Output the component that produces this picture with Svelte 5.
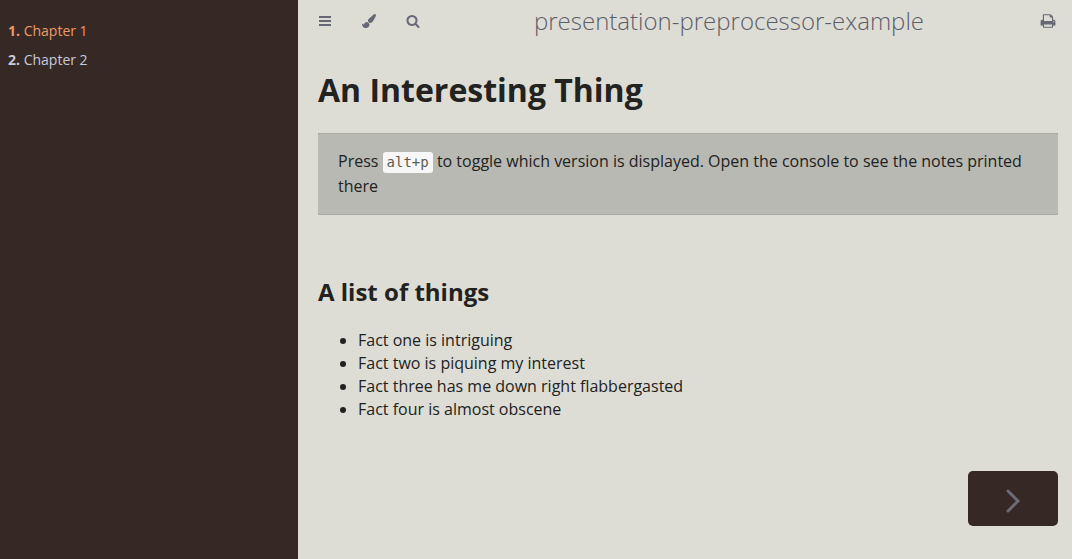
<script>
  const chapters = ['Chapter 1', 'Chapter 2'];
  const facts = [
    'Fact one is intriguing',
    'Fact two is piquing my interest',
    'Fact three has me down right flabbergasted',
    'Fact four is almost obscene'
  ];
</script>

<div class="book">
  <nav class="sidebar" aria-label="Chapters">
    <ol>
      {#each chapters as chapter, i}
        <li><a href="#chapter-{i + 1}" class:active={i === 0}><strong>{i + 1}.</strong> {chapter}</a></li>
      {/each}
    </ol>
  </nav>
  <div class="page">
    <header>
      <div class="tools">
        <button aria-label="Toggle table of contents">
          <svg width="14" height="14" viewBox="0 0 14 14"><path d="M1 2h12v2H1zM1 6h12v2H1zM1 10h12v2H1z"/></svg>
        </button>
        <button aria-label="Change theme">
          <svg width="14" height="14" viewBox="0 0 1792 1792"><path d="M1615 0q70 0 122.500 46.500t52.500 116.500q0 63-45 151-332 629-465 752-97 91-218 91-126 0-216.500-92.500t-90.500-219.500q0-128 92-212l638-579q59-54 130-54zm-909 1034q39 76 106.500 130t150.500 76l1 71q4 213-129.500 347t-348.500 134q-123 0-218-46.500t-152.500-127.500-86.500-183-29-220q7 5 41 30t62 44.500 59 36.500 46 17q41 0 55-37 25-66 57.500-112.500t69.500-76 88-47.500 103-25.500 125-10.500z"/></svg>
        </button>
        <button aria-label="Search">
          <svg width="14" height="14" viewBox="0 0 1792 1792"><path d="M1216 832q0-185-131.500-316.500T768 384 451.500 515.500 320 832t131.500 316.500T768 1280t316.500-131.500T1216 832zm512 832q0 52-38 90t-90 38q-54 0-90-38l-343-342q-179 124-399 124-143 0-273.500-55.500t-225-150-150-225T64 832t55.500-273.500 150-225 225-150T768 128t273.500 55.500 225 150 150 225T1472 832q0 220-124 399l343 343q37 37 37 90z"/></svg>
        </button>
      </div>
      <h1 class="title">presentation-preprocessor-example</h1>
      <button class="print" aria-label="Print this book">
        <svg width="16" height="16" viewBox="0 0 1792 1792"><path d="M448 1536h896v-256H448v256zm0-640h896V512h-160q-40 0-68-28t-28-68V256H448v640zm1152 64q0-26-19-45t-45-19-45 19-19 45 19 45 45 19 45-19 19-45zm128 0v416q0 13-9.500 22.500t-22.500 9.500h-224v160q0 40-28 68t-68 28H416q-40 0-68-28t-28-68v-160H96q-13 0-22.500-9.500T64 1376V960q0-79 56.500-135.500T256 768h64V224q0-40 28-68t68-28h672q40 0 88 20t76 48l152 152q28 28 48 76t20 88v256h64q79 0 135.500 56.500T1728 960z"/></svg>
      </button>
    </header>
    <main>
      <h1>An Interesting Thing</h1>
      <blockquote>Press <code>alt+p</code> to toggle which version is displayed. Open the console to see the notes printed there</blockquote>
      <h2>A list of things</h2>
      <ul>
        {#each facts as fact}<li>{fact}</li>{/each}
      </ul>
    </main>
    <footer>
      <a class="next" href="#chapter-2" aria-label="Next chapter">
        <svg width="24" height="28" viewBox="0 0 24 28"><path d="M7 6l10 10L7 26"/></svg>
      </a>
    </footer>
  </div>
</div>

<style>
  :global(body) { margin: 0; background: #ddddd5; }
  .book {
    display: grid;
    grid-template-columns: 298px 1fr;
    min-height: 100vh;
    font: 16px/23px "Open Sans", sans-serif;
    color: #222221;
  }
  .sidebar { background: #362925; padding: 20px 8px; font-size: 14px; line-height: 22px; }
  ol { list-style: none; margin: 0; padding: 0; display: grid; gap: 7px; }
  a { color: #c8c9db; text-decoration: none; }
  a.active { color: #ee9a66; }
  .page { display: flex; flex-direction: column; padding: 0 14px 33px 20px; }
  header { display: flex; align-items: center; height: 41px; padding-right: 2px; color: #676876; }
  .tools { display: flex; gap: 30px; }
  button { display: flex; border: 0; background: none; padding: 0; color: inherit; cursor: pointer; }
  svg { display: block; fill: currentColor; }
  .title { flex: 1; margin: 0; padding-right: 2px; text-align: center; font-size: 24px; line-height: 42px; font-weight: 300; color: #5c5d6a; }
  main { flex: 1; }
  main h1 { margin: 26px 0 21px; font-size: 32px; line-height: 45px; font-weight: 700; }
  blockquote { margin: 0; padding: 15px 20px; line-height: 25px; background: #b8b9b3; border: solid #a9aaa4; border-width: 1px 0; }
  code { font: 14px/20px "DejaVu Sans Mono", monospace; padding: 2px 4px 3px; border-radius: 3px; background: #f6f7f6; color: #5f5c50; }
  h2 { margin: 60px 0 20px; font-size: 24px; line-height: 34px; }
  ul { margin: 0; padding-left: 40px; }
  footer { display: flex; justify-content: flex-end; }
  .next { display: flex; align-items: center; justify-content: center; width: 90px; height: 55px; border-radius: 5px; background: #362925; color: #6b6c7a; }
  .next svg { overflow: visible; fill: none; stroke: currentColor; stroke-width: 3; stroke-linecap: round; }
</style>
